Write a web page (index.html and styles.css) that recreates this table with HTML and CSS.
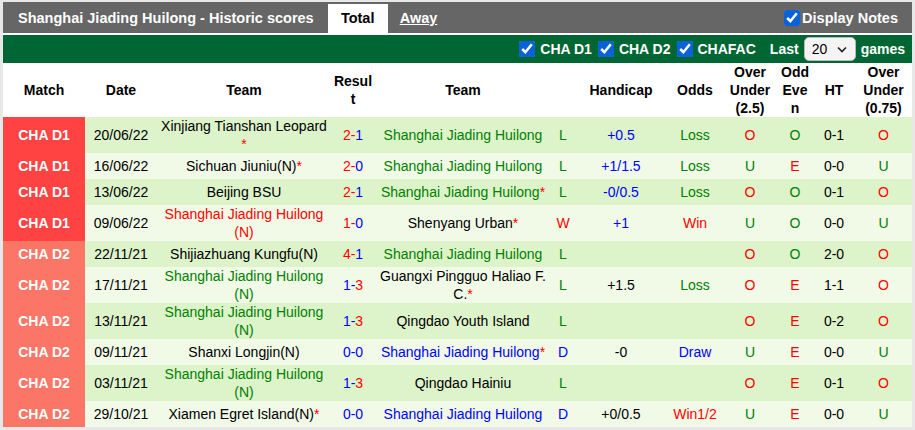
FILE: index.html
```html
<!DOCTYPE html>
<html>
<head>
<meta charset="utf-8">
<title>Historic scores</title>
<link rel="stylesheet" href="styles.css">
</head>
<body>
<div class="panel">
  <div class="titlebar">
    <span class="title">Shanghai Jiading Huilong - Historic scores</span>
    <span class="tab active">Total</span>
    <a class="tab link">Away</a>
    <label class="notes"><input class="cb" type="checkbox" checked>Display Notes</label>
  </div>
  <div class="filterbar">
    <label class="filter"><input class="cb" type="checkbox" checked>CHA D1</label>
    <label class="filter"><input class="cb" type="checkbox" checked>CHA D2</label>
    <label class="filter"><input class="cb" type="checkbox" checked>CHAFAC</label>
    <span class="last">Last</span>
    <span class="select">20<svg class="chev" width="10" height="7" viewBox="0 0 10 7"><path d="M1 1.5 L5 5.5 L9 1.5" fill="none" stroke="#222" stroke-width="1.6"/></svg></span>
    <span class="games">games</span>
  </div>
  <table class="scores">
    <colgroup>
      <col class="c-match"><col class="c-date"><col class="c-team"><col class="c-res"><col class="c-team2"><col class="c-wl"><col class="c-hcp"><col class="c-odds"><col class="c-ou"><col class="c-oe"><col class="c-ht"><col class="c-ou2">
    </colgroup>
    <thead>
      <tr>
        <th>Match</th><th>Date</th><th>Team</th><th>Result</th><th>Team</th><th></th><th>Handicap</th><th>Odds</th><th>Over Under (2.5)</th><th>Odd Even</th><th>HT</th><th>Over Under (0.75)</th>
      </tr>
    </thead>
    <tbody>
      <tr>
        <td class="lg d1">CHA D1</td><td>20/06/22</td><td>Xinjiang Tianshan Leopard<wbr><span class="r">*</span></td><td><span class="r">2-</span><span class="b">1</span></td><td class="g">Shanghai Jiading Huilong</td><td class="g">L</td><td class="b">+0.5</td><td class="g">Loss</td><td class="r">O</td><td class="g">O</td><td>0-1</td><td class="r">O</td>
      </tr>
      <tr>
        <td class="lg d1">CHA D1</td><td>16/06/22</td><td>Sichuan Jiuniu(N)<span class="r">*</span></td><td><span class="r">2-</span><span class="b">0</span></td><td class="g">Shanghai Jiading Huilong</td><td class="g">L</td><td class="b">+1/1.5</td><td class="g">Loss</td><td class="g">U</td><td class="r">E</td><td>0-0</td><td class="g">U</td>
      </tr>
      <tr>
        <td class="lg d1">CHA D1</td><td>13/06/22</td><td>Beijing BSU</td><td><span class="r">2-</span><span class="b">1</span></td><td class="g">Shanghai Jiading Huilong<span class="r">*</span></td><td class="g">L</td><td class="b">-0/0.5</td><td class="g">Loss</td><td class="r">O</td><td class="g">O</td><td>0-1</td><td class="r">O</td>
      </tr>
      <tr>
        <td class="lg d1">CHA D1</td><td>09/06/22</td><td class="r">Shanghai Jiading Huilong (N)</td><td><span class="r">1-</span><span class="b">0</span></td><td>Shenyang Urban<span class="r">*</span></td><td class="r">W</td><td class="b">+1</td><td class="r">Win</td><td class="g">U</td><td class="g">O</td><td>0-0</td><td class="g">U</td>
      </tr>
      <tr>
        <td class="lg d2">CHA D2</td><td>22/11/21</td><td>Shijiazhuang Kungfu(N)</td><td><span class="r">4-</span><span class="b">1</span></td><td class="g">Shanghai Jiading Huilong</td><td class="g">L</td><td></td><td></td><td class="r">O</td><td class="g">O</td><td>2-0</td><td class="r">O</td>
      </tr>
      <tr>
        <td class="lg d2">CHA D2</td><td>17/11/21</td><td class="g">Shanghai Jiading Huilong (N)</td><td><span class="b">1-</span><span class="r">3</span></td><td>Guangxi Pingguo Haliao F. C.<span class="r">*</span></td><td class="g">L</td><td>+1.5</td><td class="g">Loss</td><td class="r">O</td><td class="r">E</td><td>1-1</td><td class="r">O</td>
      </tr>
      <tr>
        <td class="lg d2">CHA D2</td><td>13/11/21</td><td class="g">Shanghai Jiading Huilong (N)</td><td><span class="b">1-</span><span class="r">3</span></td><td>Qingdao Youth Island</td><td class="g">L</td><td></td><td></td><td class="r">O</td><td class="r">E</td><td>0-2</td><td class="r">O</td>
      </tr>
      <tr>
        <td class="lg d2">CHA D2</td><td>09/11/21</td><td>Shanxi Longjin(N)</td><td class="b">0-0</td><td class="b">Shanghai Jiading Huilong<span class="r">*</span></td><td class="b">D</td><td>-0</td><td class="b">Draw</td><td class="g">U</td><td class="r">E</td><td>0-0</td><td class="g">U</td>
      </tr>
      <tr>
        <td class="lg d2">CHA D2</td><td>03/11/21</td><td class="g">Shanghai Jiading Huilong (N)</td><td><span class="b">1-</span><span class="r">3</span></td><td>Qingdao Hainiu</td><td class="g">L</td><td></td><td></td><td class="r">O</td><td class="r">E</td><td>0-1</td><td class="r">O</td>
      </tr>
      <tr>
        <td class="lg d2">CHA D2</td><td>29/10/21</td><td>Xiamen Egret Island(N)<span class="r">*</span></td><td class="b">0-0</td><td class="b">Shanghai Jiading Huilong</td><td class="b">D</td><td>+0/0.5</td><td class="r">Win1/2</td><td class="g">U</td><td class="r">E</td><td>0-0</td><td class="g">U</td>
      </tr>
    </tbody>
  </table>
</div>
</body>
</html>
```

FILE: styles.css
```css
html, body {
  margin: 0;
  padding: 0;
}
body {
  background: #e8e8e8;
  font-family: "Liberation Sans", Arial, sans-serif;
  font-size: 14px;
  color: #000;
}
.panel {
  margin: 2px 3px 0 3px;
  background: #fff;
}
.titlebar {
  display: flex;
  align-items: flex-end;
  height: 31px;
  background: #666;
  color: #fff;
  font-weight: bold;
  padding: 0 14px 0 15px;
  border-bottom: 2px solid #fff;
}
.title {
  align-self: center;
  font-size: 14.5px;
  white-space: nowrap;
}
.tab {
  height: 29px;
  line-height: 29px;
  box-sizing: border-box;
  white-space: nowrap;
}
.tab.active {
  margin-left: 14px;
  width: 60px;
  text-align: center;
  background: #fff;
  color: #000;
  font-size: 14.5px;
}
.tab.link {
  margin-left: 12px;
  color: #fff;
  text-decoration: underline;
  font-size: 14.5px;
}
.notes {
  margin-left: auto;
  align-self: center;
  display: flex;
  align-items: center;
  font-size: 14.5px;
  white-space: nowrap;
}
.cb {
  width: 16px;
  height: 16px;
  margin: 0 2px 0 0;
  accent-color: #0b62d6;
}
.filterbar {
  display: flex;
  justify-content: flex-end;
  align-items: center;
  height: 28px;
  background: #006633;
  color: #fff;
  font-weight: bold;
  padding-right: 7px;
  white-space: nowrap;
}
.filter {
  display: flex;
  align-items: center;
  gap: 5px;
  margin-right: 6px;
}
.filter .cb {
  margin: 0;
}
.last {
  margin-left: 8px;
}
.select {
  display: inline-flex;
  align-items: center;
  justify-content: space-between;
  box-sizing: border-box;
  width: 52px;
  height: 24px;
  margin: 0 5px;
  padding: 0 8px 0 7px;
  background: #f4f4f4;
  border: 1px solid #b9b9b9;
  border-radius: 5px;
  color: #000;
  font-weight: normal;
  font-size: 14px;
}
.scores {
  width: 909px;
  table-layout: fixed;
  border-collapse: collapse;
  border-spacing: 0;
  line-height: 18px;
}
.c-match { width: 82px; }
.c-date { width: 72px; }
.c-team { width: 174px; }
.c-res { width: 44px; }
.c-team2 { width: 176px; }
.c-wl { width: 24px; }
.c-hcp { width: 92px; }
.c-odds { width: 56px; }
.c-ou { width: 54px; }
.c-oe { width: 36px; }
.c-ht { width: 42px; }
.c-ou2 { width: 57px; }
.scores th, .scores td {
  padding: 0 2px;
  text-align: center;
  vertical-align: middle;
  overflow-wrap: break-word;
  word-wrap: break-word;
}
.scores th {
  background: #fff;
  font-weight: bold;
}
.scores tbody tr {
  height: 26px;
}
.scores tbody tr:nth-child(odd) {
  background: #ddf3ca;
}
.scores tbody tr:nth-child(even) {
  background: #f0fae7;
}
.scores td.lg {
  color: #fff;
  font-weight: bold;
}
.scores td.d1 { background: #ff4242; }
.scores td.d2 { background: #fb7666; }
.r { color: #f00; }
.b { color: #00f; }
.g { color: #008000; }
```
